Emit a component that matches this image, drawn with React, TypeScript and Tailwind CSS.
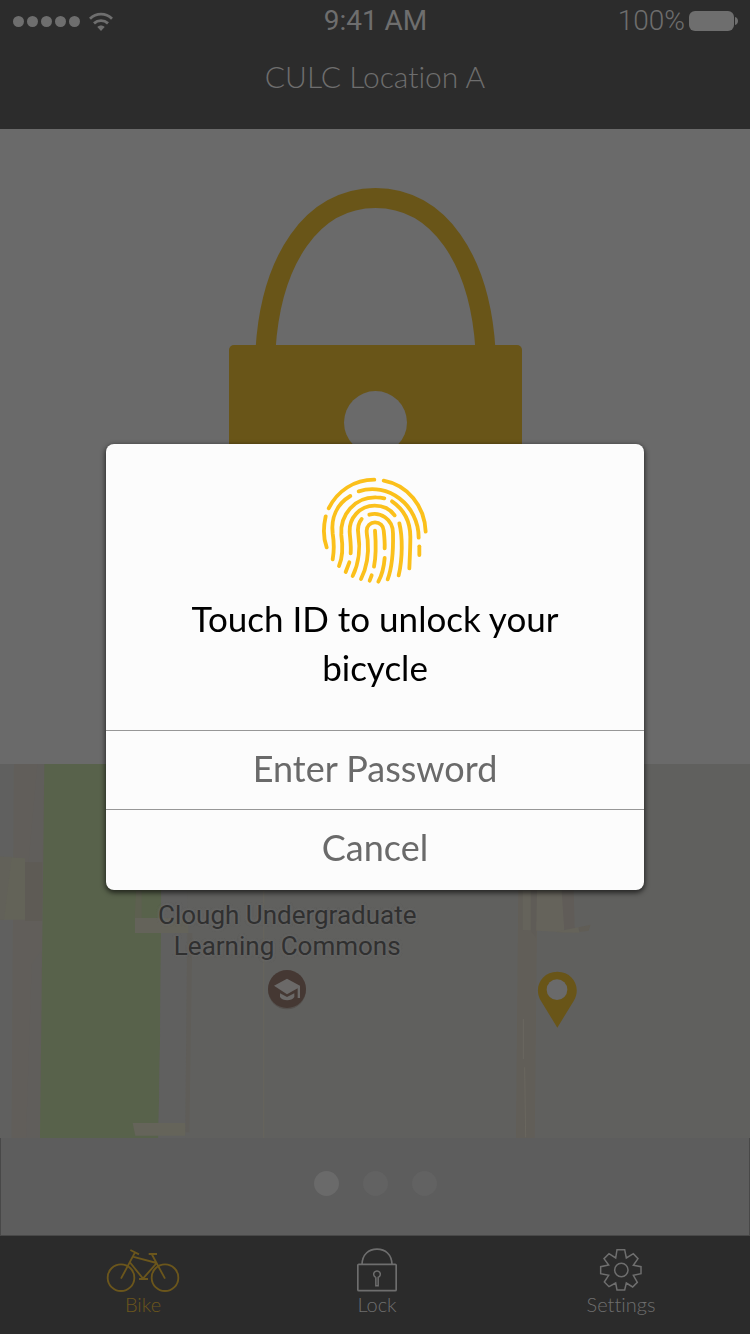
import React from "react";

function StatusBar() {
  return (
    <div className="grid h-[42px] grid-cols-3 items-center pr-3 pl-[13px] font-['Roboto',sans-serif] text-[28px] leading-8 text-[#6e6e6e]">
      <div className="flex items-center gap-[3px]" aria-label="Signal strength">
        {[0, 1, 2, 3, 4].map((dot) => (
          <span key={dot} className="size-[11px] rounded-full bg-[#6e6e6e]" />
        ))}
        <svg className="ml-[6px] h-[19px] w-6" viewBox="0 0 72 57" aria-hidden="true">
          <g fill="none" stroke="#6e6e6e" strokeWidth="8.500">
            <path d="M3 20 C22 2 50 2 69 20" />
            <path d="M15 34 C27 23 45 23 57 34" />
          </g>
          <path d="M25 45 C31 39 41 39 47 45 L36 57 Z" fill="#6e6e6e" />
        </svg>
      </div>
      <span className="text-center">9:41 AM</span>
      <div className="flex items-center justify-end gap-1">
        <span className="font-light">100%</span>
        <svg className="h-5 w-[49px]" viewBox="0 0 49 20" fill="#6e6e6e" aria-hidden="true">
          <rect width="45" height="20" rx="6" />
          <path d="M46 6 C50 7 50 13 46 14 Z" />
        </svg>
      </div>
    </div>
  );
}

function BigLock() {
  return (
    <svg className="h-[417px] w-[293px]" viewBox="229 188 293 417" aria-hidden="true">
      <path
        d="M265.500 350 C271 260 312 198 375.500 198 C439 198 480 260 485.500 350"
        fill="none"
        stroke="#695518"
        strokeWidth="20"
      />
      <rect x="229" y="345" width="293" height="260" rx="5" fill="#695518" />
      <circle cx="375.500" cy="422.500" r="31.500" fill="#6a6a6a" />
      <path d="M362 445 H389 L396 530 H355 Z" fill="#6a6a6a" />
    </svg>
  );
}

function CampusMap() {
  return (
    <section className="relative h-[374px] overflow-hidden bg-[#60605e]" aria-label="Map">
      <svg
        className="absolute inset-0 h-full w-full"
        viewBox="0 0 2250 1122"
        preserveAspectRatio="xMidYMid slice"
        aria-hidden="true"
      >
        <path d="M0 0 H42 L35 1122 H0 Z" fill="#60605f" />
        <path d="M42 0 H133 L120 1122 H35 Z" fill="#615e5a" />
        <path d="M112 0 H133 L128 300 H85 Z" fill="#605e5b" />
        <path d="M95 600 L124 560 L120 1122 H78 Z" fill="#605e5b" />
        <path d="M75 295 H127 V470 H75 Z" fill="#5e5b55" />
        <path d="M0 278 L75 283 V467 H0 Z" fill="#636358" />
        <path d="M0 278 H35 L12 467 H0 Z" fill="#626159" />
        <path d="M133 0 H480 L484 460 L480 830 L475 1122 H120 Z" fill="#58624b" />
        <path d="M484 380 H562 L556 1122 H475 L480 830 Z" fill="#60605f" />
        <path d="M562 507 H577 L568 1105 H556 Z" fill="#5f5d59" />
        <path d="M408 380 H425 V462 H404 Z" fill="#5d6050" />
        <path d="M405 462 H565 V507 H405 Z" fill="#64635a" />
        <path d="M398 1077 H556 V1115 H406 Z" fill="#65645a" />
        <path d="M791 380 V1122" stroke="#66645c" strokeWidth="3" />
        <path d="M1555 379 H1612 L1604 1122 H1548 Z" fill="#615e58" />
        <path d="M1568 379 H1688 L1694 505 L1568 498 Z" fill="#65635b" />
        <path d="M1592 379 H1611 L1608 520 L1592 500 Z" fill="#5f5c57" />
        <path d="M1685 379 H1721 L1724 494 L1693 498 Z" fill="#605c58" />
        <path d="M1693 498 L1735 490 L1738 506 L1670 505 Z" fill="#65635a" />
        <path d="M1736 490 L1772 482 L1766 500 L1738 504 Z" fill="#605d56" />
        <path d="M1570 765 V885 M1574 910 L1577 1120" stroke="#6a675f" strokeWidth="3" />
        <circle cx="861" cy="679" r="57" fill="#54504d" />
        <circle cx="861" cy="675" r="57" fill="#453833" />
        <path d="M861 644 L900 665 V702 H893 V673 L861 691 L822 665 Z" fill="#6b6968" />
        <path d="M840 688 L861 699 L883 688 V699 C875 712 848 712 840 699 Z" fill="#6b6968" />
        <path
          d="M1672 791 L1623 711 C1599 672 1624 623 1672 623 C1720 623 1745 672 1721 711 Z"
          fill="#695518"
        />
        <circle cx="1671" cy="677" r="31" fill="#6a6a6a" />
      </svg>
      <p className="absolute top-[136px] left-[38.3%] -translate-x-1/2 text-center font-['Roboto',sans-serif] text-[26px] leading-[31px] whitespace-nowrap text-[#303030] [text-shadow:0_0_3px_#6a6a6a,0_0_3px_#6a6a6a]">
        Clough Undergraduate
        <br />
        Learning Commons
      </p>
    </section>
  );
}

function PageDots() {
  return (
    <div className="flex h-[98px] items-center justify-center gap-6 border-x border-b border-[#484848] bg-[#5d5d5d] pb-[6px]">
      <button type="button" aria-label="Page 1" className="size-[25px] rounded-full bg-[#6a6a6a]" />
      <button type="button" aria-label="Page 2" className="size-[25px] rounded-full bg-[#626262]" />
      <button type="button" aria-label="Page 3" className="size-[25px] rounded-full bg-[#626262]" />
    </div>
  );
}

function BikeIcon() {
  return (
    <svg className="h-11 w-[74px]" viewBox="318 354 222 132" aria-hidden="true">
      <g fill="none" stroke="currentColor" strokeWidth="5.500">
        <circle cx="363" cy="443" r="40" />
        <circle cx="495" cy="443" r="40" />
        <path d="M363 446 L405 367 M391 360 L417 373 M398 380 L470 399 M389 396 L429 446 L470 399 M455 372 L495 446 M446 372 H471 M417 447 H444" />
      </g>
    </svg>
  );
}

function LockIcon() {
  return (
    <svg className="h-11 w-10" viewBox="321 353 120 132" aria-hidden="true">
      <g fill="none" stroke="currentColor" strokeWidth="5">
        <rect x="323.500" y="402" width="115" height="79" rx="3" />
        <path d="M336 402 C337 372 356 356.500 381 356.500 C406 356.500 425 372 426 402" />
        <path d="M377.500 441 V466 H384.500 V441 A10 10 0 1 0 377.500 441" strokeWidth="4.500" />
      </g>
    </svg>
  );
}

function GearIcon() {
  return (
    <svg className="h-11 w-11" viewBox="297 354 132 132" aria-hidden="true">
      <g fill="none" stroke="currentColor" strokeWidth="4.500">
        <path d="M351 359 H374 L379 384 L400 371 L414 386 L400 406 L423 410 V431 L400 436 L412 457 L398 471 L379 459 L374 480 H351 L347 459 L327 470 L313 456 L326 436 L302 431 V410 L326 405 L312 386 L327 371 L347 384 Z" />
        <circle cx="364" cy="420" r="20" />
      </g>
    </svg>
  );
}

function TabBar() {
  const tab = "flex flex-col items-center text-[20px] leading-6";
  return (
    <nav className="grid h-[98px] grid-cols-[234fr_234fr_254fr] bg-[#2b2b2b] pt-3 pr-[2px] pl-[26px] font-light text-[#6e6e6e]">
      <a href="#bike" className={tab + " text-[#6b561c]"} aria-current="page">
        <BikeIcon />
        Bike
      </a>
      <a href="#lock" className={tab}>
        <LockIcon />
        Lock
      </a>
      <a href="#settings" className={tab}>
        <GearIcon />
        Settings
      </a>
    </nav>
  );
}

const ridges = [
  "M72 130 C98 78 148 44 209 44",
  "M237 47 C308 60 360 122 363 200",
  "M162 79 C250 50 342 120 342 218",
  "M63 154 C56 185 56 220 66 247",
  "M137 93 C95 118 79 160 84 205 C88 230 89 255 84 283",
  "M103 303 C115 275 115 245 110 210 C105 150 150 95 215 97 C223 97 231 98 239 100",
  "M262 109 C300 135 317 170 317 215 C317 250 315 285 314 310",
  "M138 265 C140 240 136 220 135 200 C133 160 165 122 210 122 C235 122 257 133 270 151",
  "M171 162 C160 175 158 190 161 208 C166 240 165 290 144 333",
  "M194 149 C225 140 265 160 265 205 C266 250 265 300 249 343",
  "M169 342 C185 310 193 270 189 225 C187 212 186 205 186 197 C186 183 197 172 211 172 C226 172 236 183 237 196 C239 215 241 232 240 250",
  "M211 197 C214 235 214 275 208 305",
  "M284 175 C294 215 294 280 282 331",
  "M240 279 C238 305 232 330 221 350",
  "M201 331 L195 347",
  "M134 292 L123 321",
  "M344 244 V270",
];

function Fingerprint() {
  return (
    <svg className="size-[108px]" viewBox="49 36 324 324" aria-hidden="true">
      <g fill="none" stroke="#fbc01b" strokeWidth="11.500" strokeLinecap="round">
        {ridges.map((d) => (
          <path key={d} d={d} />
        ))}
      </g>
    </svg>
  );
}

function TouchIdDialog() {
  const action =
    "border-t border-[#979797] pt-[17px] text-[36px] leading-10 text-[#6a6a6a]";
  return (
    <div className="fixed inset-0 flex items-center justify-center px-4">
      <div
        role="dialog"
        aria-modal="true"
        aria-labelledby="touch-id-title"
        className="flex w-full max-w-[538px] flex-col rounded-lg bg-[#fcfcfc] shadow-[0_2px_5px_1px_rgba(0,0,0,0.6)]"
      >
        <div className="flex flex-col items-center px-16 pt-[33px] pb-[38px]">
          <Fingerprint />
          <h2
            id="touch-id-title"
            className="mt-[9px] text-center text-[35px] leading-[49px] text-black"
          >
            Touch ID to unlock your bicycle
          </h2>
        </div>
        <button type="button" className={action + " pb-[21px]"}>
          Enter Password
        </button>
        <button type="button" className={action + " pb-[23px]"}>
          Cancel
        </button>
      </div>
    </div>
  );
}

export default function App() {
  return (
    <div className="flex min-h-screen flex-col bg-[#6a6a6a] font-['Lato',sans-serif] [font-variant-ligatures:none]">
      <header className="h-[129px] bg-[#2c2c2c]">
        <StatusBar />
        <h1 className="mt-[14px] text-center text-[30px] leading-10 font-light text-[#6e6e6e]">
          CULC Location A
        </h1>
      </header>
      <main className="flex flex-1 flex-col">
        <div className="flex flex-1 justify-center pt-[59px]">
          <BigLock />
        </div>
        <CampusMap />
        <PageDots />
      </main>
      <TabBar />
      <TouchIdDialog />
    </div>
  );
}
